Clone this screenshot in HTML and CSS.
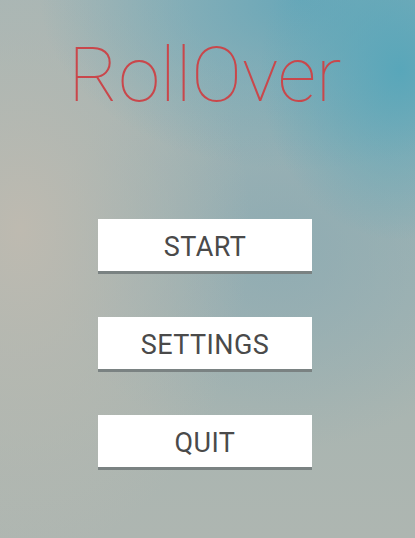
FILE: index.html
```html
<!DOCTYPE html>
<html>
<head>
<meta charset="utf-8">
<link rel="stylesheet" href="styles.css">
</head>
<body>
<main class="screen">
  <h1 class="title">RollOver</h1>
  <nav class="menu">
    <button class="menu-btn">START</button>
    <button class="menu-btn">SETTINGS</button>
    <button class="menu-btn">QUIT</button>
  </nav>
</main>
</body>
</html>
```
FILE: styles.css
```css
html, body {
  margin: 0;
  padding: 0;
}
body {
  width: 415px;
  height: 538px;
  overflow: hidden;
  font-family: Roboto, "Noto Sans", sans-serif;
}
.screen {
  width: 415px;
  height: 538px;
  box-sizing: border-box;
  display: flex;
  flex-direction: column;
  align-items: center;
  padding-top: 36px;
  padding-right: 5px;
  background:
    radial-gradient(ellipse 140px 170px at 400px 70px, rgba(86,166,186,0.95), rgba(86,166,186,0) 100%),
    radial-gradient(ellipse 260px 170px at 300px 0px, rgba(95,165,185,0.85), rgba(95,165,185,0) 100%),
    radial-gradient(ellipse 230px 330px at 20px 230px, rgba(190,186,176,1), rgba(190,186,176,0) 100%),
    radial-gradient(ellipse 230px 200px at 280px 250px, rgba(140,170,178,0.8), rgba(140,170,178,0) 100%),
    linear-gradient(to bottom, #a2b5b6 0%, #9db3b4 40%, #a9b5b1 75%, #aeb6b1 100%);
}
.title {
  margin: 0;
  font-family: Roboto, sans-serif;
  font-weight: 100;
  font-size: 76px;
  line-height: 78px;
  color: #c9474b;
  letter-spacing: 0;
}
.menu {
  display: flex;
  flex-direction: column;
  align-items: center;
  gap: 46px;
  margin-top: 105px;
}
.menu-btn {
  width: 214px;
  height: 52px;
  margin: 0;
  padding: 3px 0 0;
  box-sizing: border-box;
  border: none;
  border-radius: 0;
  background: #ffffff;
  box-shadow: 0 3px 0 #7a8282;
  font-family: Roboto, sans-serif;
  font-size: 27px;
  font-weight: 400;
  color: #4a4a4a;
  letter-spacing: 0.4px;
  cursor: pointer;
}
```
